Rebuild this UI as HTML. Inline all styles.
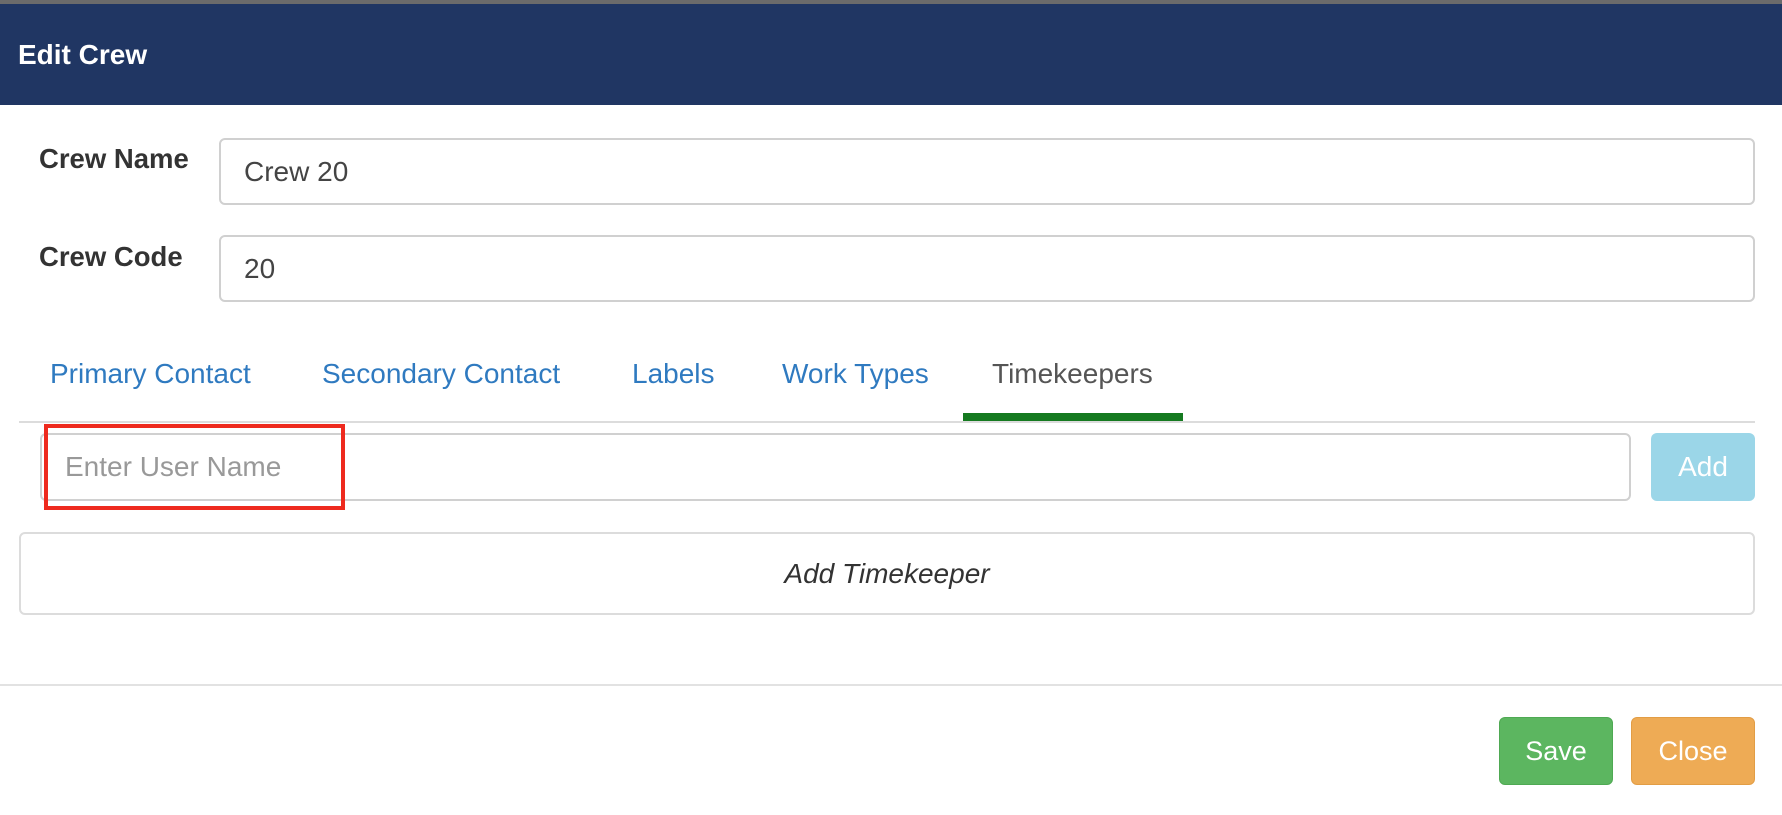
<!DOCTYPE html>
<html><head><style>
*{box-sizing:border-box;margin:0;padding:0}
body{width:1782px;height:815px;background:#fff;font-family:"Liberation Sans",Arial,sans-serif;position:relative;overflow:hidden}
.abs{position:absolute}
.top{left:0;top:0;width:1782px;height:4px;background:#6b6b6b}
.hdr{left:0;top:4px;width:1782px;height:101px;background:#203663;color:#fff;font-weight:bold;font-size:28px;padding-left:18px;line-height:101px}
.lbl{font-weight:bold;font-size:27.5px;color:#333;left:39px}
.inp{border:2px solid #d0d0d0;border-radius:6px;background:#fff;font-size:28px;color:#444;padding-left:23px;display:flex;align-items:center}
.tab{font-size:28px;color:#2f7ac0;top:358px}
</style></head><body>
<div class="abs top"></div>
<div class="abs hdr">Edit Crew</div>
<div class="abs lbl" style="top:143px">Crew Name</div>
<div class="abs inp" style="left:219px;top:138px;width:1536px;height:67px">Crew 20</div>
<div class="abs lbl" style="top:241px">Crew Code</div>
<div class="abs inp" style="left:219px;top:235px;width:1536px;height:67px">20</div>
<div class="abs tab" style="left:50px">Primary Contact</div>
<div class="abs tab" style="left:322px">Secondary Contact</div>
<div class="abs tab" style="left:632px">Labels</div>
<div class="abs tab" style="left:782px">Work Types</div>
<div class="abs tab" style="left:992px;color:#555">Timekeepers</div>
<div class="abs" style="left:963px;top:413px;width:220px;height:9px;background:#157a20"></div>
<div class="abs" style="left:19px;top:421px;width:1736px;height:2px;background:#dcdcdc"></div>
<div class="abs inp" style="left:40px;top:433px;width:1591px;height:68px;color:#999;font-size:28px">Enter User Name</div>
<div class="abs" style="left:44px;top:424px;width:301px;height:86px;border:4px solid #ee2a1e"></div>
<div class="abs" style="left:1651px;top:433px;width:104px;height:68px;background:#9bd6e8;border-radius:6px;color:#fff;font-size:28px;text-align:center;line-height:68px">Add</div>
<div class="abs" style="left:19px;top:532px;width:1736px;height:83px;border:2px solid #dcdcdc;border-radius:6px;font-style:italic;font-size:28px;color:#333;text-align:center;line-height:79px">Add Timekeeper</div>
<div class="abs" style="left:0;top:684px;width:1782px;height:2px;background:#e2e2e2"></div>
<div class="abs" style="left:1499px;top:717px;width:114px;height:68px;background:#5cb660;border:1px solid #4fa953;border-radius:6px;color:#fff;font-size:27px;text-align:center;line-height:66px">Save</div>
<div class="abs" style="left:1631px;top:717px;width:124px;height:68px;background:#eeab55;border:1px solid #e29d45;border-radius:6px;color:#fff;font-size:27px;text-align:center;line-height:66px">Close</div>
</body></html>
